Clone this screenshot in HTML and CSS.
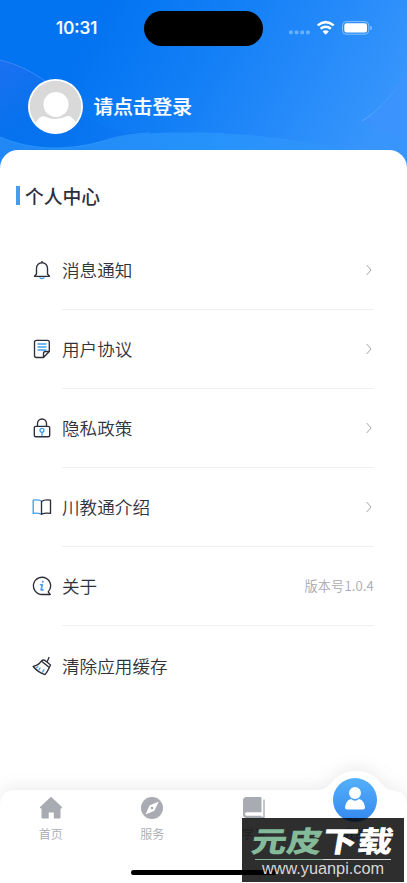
FILE: index.html
```html
<!DOCTYPE html>
<html lang="zh-CN">
<head>
<meta charset="utf-8">
<title>个人中心</title>
<link rel="stylesheet" href="styles.css">
</head>
<body>
<div class="screen">
  <header class="hero">
    <svg class="hero-bg" viewBox="0 0 407 175" width="407" height="175">
      <defs>
        <linearGradient id="sky" gradientUnits="userSpaceOnUse" x1="90" y1="30" x2="350" y2="175"><stop offset="0" stop-color="#0273f1"/><stop offset=".45" stop-color="#1681f7"/><stop offset="1" stop-color="#3795fc"/></linearGradient>
        <linearGradient id="left" x1="0" y1="0" x2="1" y2="1"><stop offset="0" stop-color="#1c70f1"/><stop offset=".4" stop-color="#0872ed"/><stop offset="1" stop-color="#0872ed" stop-opacity="0"/></linearGradient>
        <linearGradient id="wave" x1="0" y1="0" x2="1" y2="0"><stop offset="0" stop-color="#2187f4"/><stop offset=".5" stop-color="#2592fb"/><stop offset="1" stop-color="#3795fc"/></linearGradient>
        <linearGradient id="arc" x1="0" y1="1" x2="1" y2="0"><stop offset="0" stop-color="#75b9ff"/><stop offset="1" stop-color="#75b9ff" stop-opacity="0"/></linearGradient>
      </defs>
      <path fill="url(#sky)" d="M0 0h407v175H0z"/>
      <path fill="url(#left)" d="M0 60C22 65 40 75 56 92C75 112 105 135 150 134C110 146 65 156 0 137z"/>
      <path fill="none" stroke="#4b93f6" stroke-width=".7" d="M0 60C20 65 32 72 45 81"/>
      <path fill="url(#wave)" d="M0 137C35 152 72 150 103 141C130 133 160 132 204 132.500C260 134 310 142 362 150L407 158V175H0z"/>
      <path fill="none" stroke="#369bff" stroke-width=".7" d="M0 137C35 152 72 150 103 141C118 136 132 134 150 133"/>
      <path fill="#468fff" fill-opacity=".35" d="M407 73C394 93 381 110 362 121C380 130 394 136 407 139z"/>
      <path fill="none" stroke="url(#arc)" stroke-width=".6" d="M362 121C379 111 393 94 404 78"/>
    </svg>
    <div class="status">
      <span class="clock">10:31</span>
      <span class="island"></span>
      <svg class="signals" width="84" height="16" viewBox="0 0 84 16">
        <g fill="#6ab1fc"><rect x="0" y="10.500" width="3.800" height="3.800" rx="1.200"/><rect x="5.700" y="10.500" width="3.800" height="3.800" rx="1.200"/><rect x="11.300" y="10.500" width="3.800" height="3.800" rx="1.200"/><rect x="17" y="10.500" width="3.800" height="3.800" rx="1.200"/></g>
        <g fill="none" stroke="#fff" stroke-width="2.500"><path d="M28.700 5.400Q36.700-1.200 44.700 5.400M31.600 8.800Q36.700 4.700 41.800 8.800"/></g>
        <path fill="#fff" d="M33.600 11.500Q36.700 8.900 39.800 11.500L36.700 14.700z"/>
        <rect x="53.500" y="1.600" width="26.300" height="12.600" rx="3.800" fill="none" stroke="#86c0fd"/>
        <rect x="55.300" y="3.300" width="22.700" height="9.200" rx="2.300" fill="#fff"/>
        <path fill="#86c0fd" d="M81.200 5.700q1.800.5 1.800 2.200t-1.800 2.200z"/>
      </svg>
    </div>
    <div class="profile">
      <svg class="avatar" width="55" height="55" viewBox="0 0 54 54">
        <defs><clipPath id="face"><circle cx="27" cy="27" r="25.300"/></clipPath></defs>
        <circle cx="27" cy="27" r="27" fill="#fff"/><circle cx="27" cy="27" r="25.300" fill="#d9d9d9"/>
        <g fill="#fff" clip-path="url(#face)"><path d="M0 54L9 40.500Q13 35.500 17 37Q27 42 38 36.500Q42 35.500 46 41L54 54z"/><circle cx="27.500" cy="25" r="13.700" fill="#d9d9d9"/><circle cx="27.500" cy="25" r="12.300"/></g>
      </svg>
      <span class="login">请点击登录</span>
    </div>
  </header>
  <main class="sheet">
    <h1 class="title">个人中心</h1>
    <ul class="menu">
      <li class="row">
        <svg class="icon" viewBox="0 0 20 20"><path stroke="#459dec" d="M8 17.700q2 1.700 4 0"/><path d="M10 1.500v1.200M4.500 14V8.200a5.500 5.500 0 0 1 11 0V14l2 2.300H2.500z"/></svg>
        <div class="cell"><span>消息通知</span><svg class="chevron" viewBox="0 0 6 12"><path d="M.7 1l4.300 5-4.300 5"/></svg></div>
      </li>
      <li class="row">
        <svg class="icon" viewBox="0 0 20 20"><path d="M17.300 12.500V3.300Q17.300 1.300 15.300 1.300H4.500Q2.500 1.300 2.500 3.300V16.500Q2.500 18.500 4.500 18.500H11.500zM11.500 18.500V14.500Q11.500 12.500 13.500 12.500H17.300"/><path stroke="#459dec" d="M6 5h8M6 8h8M6 11h8"/></svg>
        <div class="cell"><span>用户协议</span><svg class="chevron" viewBox="0 0 6 12"><path d="M.7 1l4.300 5-4.300 5"/></svg></div>
      </li>
      <li class="row">
        <svg class="icon" viewBox="0 0 20 20"><rect x="2.300" y="8.300" width="15.400" height="10.400" rx="1.500"/><path d="M5.500 8V5.500a4.500 4.500 0 0 1 9 0V8"/><g stroke="#459dec"><circle cx="10" cy="12.300" r="2"/><path d="M10 14.500V17.500"/></g></svg>
        <div class="cell"><span>隐私政策</span><svg class="chevron" viewBox="0 0 6 12"><path d="M.7 1l4.300 5-4.300 5"/></svg></div>
      </li>
      <li class="row">
        <svg class="icon" viewBox="0 0 20 20"><path stroke="#459dec" d="M9.500 4Q5.500 2.200 1.200 3.200V16.400Q5.500 15.700 9.300 17.200"/><path d="M9.500 17.200V4.500Q12.500 2.200 18.500 3.200V16.400Q13 15.700 9.500 17.200z"/></svg>
        <div class="cell"><span>川教通介绍</span><svg class="chevron" viewBox="0 0 6 12"><path d="M.7 1l4.300 5-4.300 5"/></svg></div>
      </li>
      <li class="row">
        <svg class="icon" viewBox="0 0 20 20"><path d="M10 18.500a8.600 8.600 0 1 1 6.200-2.600l2 2.600z"/><path stroke="#459dec" stroke-width="1.600" d="M8.400 8.700h2l-1.300 5.200h1.900M10.800 5.400v.8"/></svg>
        <div class="cell"><span>关于</span><span class="version">版本号1.0.4</span></div>
      </li>
      <li class="row">
        <svg class="icon" viewBox="0 0 20 20"><path d="M9.300 5.100L17.300 11.600L18.500 8.900L15 6L17 1.500M15 6L12.800 4.400Q11 3.200 9.300 5.100Q6.500 9.300 1.200 10.500Q5.500 16 13 18.600Q15.700 15.500 17.300 11.600"/><path stroke="#459dec" d="M6.800 14L8 12M10.500 16.200L12 13.800M4.500 11.800l1.500-1"/></svg>
        <div class="cell"><span>清除应用缓存</span></div>
      </li>
    </ul>
  </main>
  <nav class="tabs">
    <svg class="tabs-bg" width="407" height="117" viewBox="0 -24 407 117"><path d="M0 93V16Q0 0 16 0H317C325 0 327-3 332-8C345-23 368-23 380-8C385-3 387 0 391 0Q407 1 407 16V93z"/></svg>
    <div class="tab"><svg class="tab-icon" viewBox="0 0 24 24"><path d="M12 .8L23 11Q23.400 12.600 21.500 12.500V21.500Q21.500 22.500 20.500 22.500H14.800V16.500H9.700V22.500H3.500Q2.500 22.500 2.500 21.500V12.500Q.5 12.600 1 11z"/></svg><span>首页</span></div>
    <div class="tab"><svg class="tab-icon" viewBox="0 0 24 24"><circle cx="12" cy="12" r="11"/><path fill="#fff" d="M18.800 5.500L14.400 14.800 5.500 18.500 9.500 9.500z"/><circle cx="12" cy="12" r="1.300"/></svg><span>服务</span></div>
    <div class="tab"><svg class="tab-icon" viewBox="0 0 24 24"><path d="M4.500 1H19.500V16.300H4.500Q3 16.300 3 18T4.500 19.700H19.500V22H4.500Q1 22 1 18.500V4.500Q1 1 4.500 1z"/><path fill="none" stroke="#a9abb2" stroke-width="1.300" d="M22 3.500V21.500H4"/></svg><span>学习</span></div>
    <div class="tab mine"><svg class="mine-icon" width="44" height="44" viewBox="0 0 44 44"><defs><linearGradient id="blue" x1="0" y1="0" x2="0" y2="1"><stop stop-color="#54b0fb"/><stop offset="1" stop-color="#3488ee"/></linearGradient></defs><circle cx="22" cy="22" r="22" fill="url(#blue)"/><circle cx="22" cy="15" r="6" fill="#fff"/><path fill="#fff" d="M12 29.500Q12.500 22.500 18 21Q22 24.500 26 21Q31.500 22.500 32 29.500Q32 31.500 30 31.500H14Q12 31.500 12 29.500z"/></svg><span>我的</span></div>
  </nav>
  <div class="home-bar"></div>
  <div class="watermark">
    <div class="brand"><span class="green">元皮</span>下载</div>
    <div class="rule"></div>
    <div class="site">www.yuanpi.com</div>
  </div>
</div>
</body>
</html>
```
FILE: styles.css
```css
* { box-sizing: border-box; }
body { margin: 0; font-family: "Noto Sans CJK SC", sans-serif; }
.screen { position: relative; width: 407px; height: 883px; overflow: hidden; background: #fff; display: flex; flex-direction: column; }
.hero { position: relative; height: 150px; flex: none; color: #fff; }
.hero-bg { position: absolute; left: 0; top: 0; }
.status { position: relative; height: 56px; display: flex; align-items: center; }
.clock { width: 88px; margin-left: 56px; font: 500 17.2px/20px Inter, sans-serif; -webkit-text-stroke: .2px #fff; }
.island { width: 119px; height: 35px; border-radius: 18px; background: #000; }
.signals { margin-left: 26px; }
.profile { position: relative; display: flex; align-items: center; padding: 23px 0 0 28px; }
.avatar { display: block; }
.login { margin: -1px 0 0 10.5px; font-weight: 500; font-size: 19.7px; line-height: 30px; -webkit-text-stroke: .2px #fff; }
.sheet { position: relative; flex: 1; background: #fff; border-radius: 18px 18px 0 0; padding-top: 31.5px; }
.title { margin: 0 0 21px 16px; display: flex; align-items: center; gap: 5px; height: 28px; color: #2d2f3c; font-size: 18.8px; line-height: 28px; font-weight: 500; }
.title::before { content: ""; width: 4px; height: 19px; background: #459dec; }
.menu { list-style: none; margin: 0; padding: 0 33px 0 32px; }
.row { display: flex; align-items: center; gap: 10px; height: 79.1px; color: #30323c; font-size: 17.6px; font-weight: 350; }
.icon { width: 20px; height: 20px; flex: none; fill: none; stroke: #2c2e39; stroke-width: 1.35; stroke-linecap: round; stroke-linejoin: round; }
.cell { flex: 1; align-self: stretch; display: flex; align-items: center; justify-content: space-between; border-bottom: 1px solid #f0f0f1; }
.row:last-child .cell { border: 0; }
.chevron { width: 6px; height: 12px; margin-right: 2px; fill: none; stroke: #a6a6aa; stroke-width: 1; }
.version { color: #aaaab0; font-size: 13.1px; letter-spacing: .2px; }
.tabs { position: absolute; left: 0; top: 790px; width: 407px; height: 93px; display: flex; color: #a9abb2; fill: #a9abb2; }
.tabs-bg { position: absolute; left: 0; top: -24px; fill: #fff; overflow: visible; filter: drop-shadow(0 -3px 8px rgba(60,70,80,.10)); }
.tab { position: relative; width: 101.5px; display: flex; flex-direction: column; align-items: center; padding-top: 6px; font-size: 12px; line-height: 18px; font-weight: 350; }
.tab-icon { width: 24px; height: 24px; margin-bottom: 5px; }
.mine { color: #2c7be5; padding-top: 0; }
.mine-icon { margin-top: -12px; margin-bottom: 3px; }
.home-bar { position: absolute; left: 131px; top: 870px; width: 145px; height: 5px; border-radius: 3px; background: #000; }
.watermark { position: absolute; left: 242px; top: 818px; width: 162px; height: 64px; background: rgba(0,0,0,.82); color: #fff; display: flex; flex-direction: column; align-items: center; }
.brand { font-weight: 900; font-size: 29px; line-height: 43px; height: 41px; white-space: nowrap; transform: scaleX(1.22) skewX(-8deg); }
.green { color: #83ba99; }
.rule { width: 136px; height: 1px; background: linear-gradient(90deg, #83ba99 50%, #ddd 50%); }
.site { margin-top: -1px; color: #d8d8d8; font: 16.3px/19px "Liberation Sans", sans-serif; }
```
